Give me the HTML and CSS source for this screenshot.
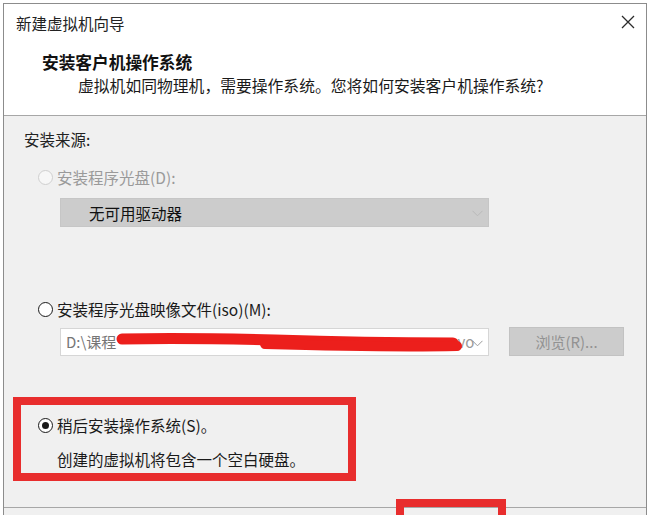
FILE: index.html
```html
<!DOCTYPE html>
<html lang="zh-CN">

<head>
  <meta charset="UTF-8">
  <meta name="viewport" content="width=device-width, initial-scale=1.0">
  <title>新建虚拟机向导</title>
  <link rel="stylesheet" href="styles.css">
</head>

<body>

  <div class="window">
    <div class="header">
      <div class="title-bar">
        <span class="title">新建虚拟机向导</span>
        <svg class="close" width="14" height="14" viewBox="0 0 14 14">
          <path d="M1 1 L13 13 M13 1 L1 13" stroke="#2b2b2b" stroke-width="1.3" fill="none"/>
        </svg>
      </div>
      <div class="heading">安装客户机操作系统</div>
      <div class="subtitle">虚拟机如同物理机，需要操作系统。您将如何安装客户机操作系统?</div>
    </div>

    <div class="content">
      <div class="section-label">安装来源:</div>

      <div class="radio-row disabled">
        <span class="radio"></span>
        <span>安装程序光盘(D):</span>
      </div>
      <div class="select disabled-select">
        <span>无可用驱动器</span>
        <svg class="chevron" width="11" height="7" viewBox="0 0 11 7">
          <path d="M0.5 0.8 L5.5 5.8 L10.5 0.8" stroke="#b9b9b9" stroke-width="1" fill="none"/>
        </svg>
      </div>

      <div class="radio-row iso-row">
        <span class="radio"></span>
        <span>安装程序光盘映像文件(iso)(M):</span>
      </div>
      <div class="file-row">
        <div class="select iso-select">
          <span class="path">D:\课程</span>
          <span class="path-tail">avo</span>
          <svg class="chevron" width="11" height="7" viewBox="0 0 11 7">
            <path d="M0.5 0.8 L5.5 5.8 L10.5 0.8" stroke="#9a9a9a" stroke-width="1" fill="none"/>
          </svg>
          <!-- red marker scribble over the path -->
          <svg class="scribble" width="360" height="26" viewBox="0 0 360 26">
            <path d="M7 10 C60 9 120 10 160 11 C220 13 280 14 338 14" stroke="#ec1f1c" stroke-width="11" stroke-linecap="round" fill="none"/>
            <path d="M150 15 C220 17 290 18 342 17" stroke="#ec1f1c" stroke-width="10" stroke-linecap="round" fill="none"/>
          </svg>
        </div>
        <button type="button" class="browse-btn" disabled>浏览(R)...</button>
      </div>

      <div class="highlight">
        <div class="radio-row">
          <span class="radio checked"></span>
          <span>稍后安装操作系统(S)。</span>
        </div>
        <div class="desc">创建的虚拟机将包含一个空白硬盘。</div>
      </div>
    </div>

    <div class="footer">
      <div class="highlight-btn"></div>
    </div>
  </div>

</body>

</html>
```

FILE: styles.css
```css
body {
  font-family: "Noto Sans CJK SC", "Noto Sans", sans-serif;
  background-color: #ffffff;
  margin: 0;
  padding: 0;
  color: #1a1a1a;
  overflow: hidden;
}

.window {
  margin: 3px 3px 0 3px;
  border: 1px solid #8c8c8c;
  border-bottom: none;
  height: 511px;
  overflow: hidden;
  background-color: #f0f0f0;
  position: relative;
}

.header {
  background-color: #ffffff;
  border-bottom: 1px solid #a7a7a7;
  padding-bottom: 19px;
}

.title-bar {
  height: 38px;
  display: flex;
  align-items: center;
  justify-content: space-between;
  padding-left: 12px;
  padding-right: 11px;
}

.title {
  font-size: 15.5px;
  color: #222;
}

.close {
  margin-top: -2px;
}

.heading {
  margin-top: 10px;
  margin-left: 38px;
  font-size: 16.7px;
  font-weight: bold;
  line-height: 20px;
  color: #111;
}

.subtitle {
  margin-top: 4px;
  margin-left: 74px;
  font-size: 15.8px;
  line-height: 20px;
  color: #1a1a1a;
}

.content {
  padding-top: 13px;
}

.section-label {
  margin-left: 20px;
  font-size: 15.5px;
  line-height: 20px;
  color: #222;
}

.radio-row {
  display: flex;
  align-items: center;
  gap: 4px;
  margin-left: 34px;
  margin-top: 18px;
  font-size: 15.5px;
  line-height: 20px;
  color: #1a1a1a;
}

.radio-row.disabled {
  color: #9a9a9a;
}

.radio {
  width: 13px;
  height: 13px;
  border: 1px solid #1a1a1a;
  border-radius: 50%;
  background-color: #ffffff;
  position: relative;
  flex-shrink: 0;
}

.disabled .radio {
  border-color: #cfcfcf;
  background-color: #f7f7f7;
}

.radio.checked::after {
  content: "";
  position: absolute;
  left: 3px;
  top: 3px;
  width: 7px;
  height: 7px;
  border-radius: 50%;
  background-color: #1a1a1a;
}

.select {
  width: 429px;
  height: 29px;
  box-sizing: border-box;
  display: flex;
  align-items: center;
  position: relative;
}

.disabled-select {
  margin-top: 11px;
  margin-left: 56px;
  background-color: #cccccc;
  border: 1px solid #c6c6c6;
  padding-left: 28px;
  font-size: 15.5px;
  color: #111;
}

.chevron {
  position: absolute;
  right: 5px;
  top: 11px;
}

.iso-row {
  margin-top: 72px;
}

.file-row {
  display: flex;
  align-items: center;
  margin-top: 8px;
  margin-left: 56px;
}

.iso-select {
  height: 28px;
  background-color: #ffffff;
  border: 1px solid #d6d6d6;
  padding-left: 5px;
  font-size: 15px;
  color: #767676;
}

.path-tail {
  position: absolute;
  left: 388px;
  color: #9a9a9a;
}

.scribble {
  position: absolute;
  left: 54px;
  top: 0;
}

.browse-btn {
  margin-left: 20px;
  width: 115px;
  height: 29px;
  background-color: #cccccc;
  border: 1px solid #c2c2c2;
  font-family: inherit;
  font-size: 15px;
  color: #929292;
  padding: 0;
}

.highlight {
  margin-top: 41px;
  margin-left: 9px;
  width: 343px;
  height: 84px;
  box-sizing: border-box;
  border: 8px solid #e82d2d;
  padding-top: 10px;
}

.highlight .radio-row {
  margin-top: 0;
  margin-left: 17px;
}

.desc {
  margin-top: 14px;
  margin-left: 36px;
  font-size: 15.5px;
  line-height: 20px;
  color: #1a1a1a;
}

.footer {
  margin-top: 26px;
  border-top: 1px solid #a7a7a7;
  height: 40px;
  position: relative;
}

.highlight-btn {
  position: absolute;
  left: 392px;
  top: -9px;
  width: 110px;
  height: 40px;
  box-sizing: border-box;
  border: 8px solid #e82d2d;
}
```
